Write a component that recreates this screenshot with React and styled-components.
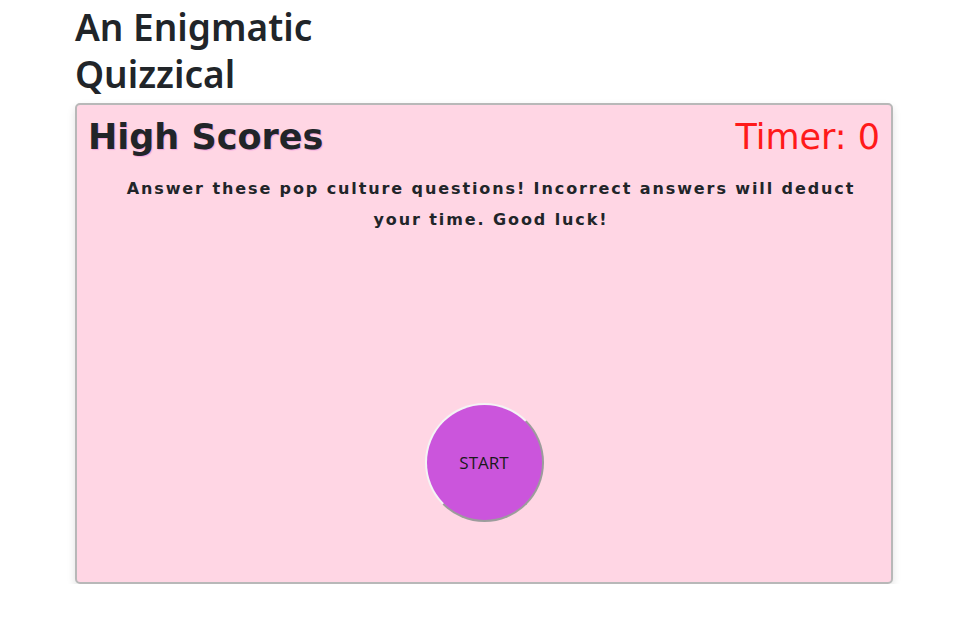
import React from 'react';
import styled, { createGlobalStyle } from 'styled-components';

const Global = createGlobalStyle`
  body {
    margin: 0;
    background: #fff;
    font-family: "Open Sans", "Noto Sans", sans-serif;
    color: #212529;
  }
`;

const Page = styled.div`
  width: 818px;
  margin-left: 75px;
  display: flex;
  flex-direction: column;
`;

const Title = styled.h1`
  margin: 3px 0 6px;
  width: 270px;
  font-family: "Noto Sans", "Open Sans", sans-serif;
  font-size: 37px;
  font-weight: 600;
  line-height: 47px;
  color: #212529;
`;

const Card = styled.div`
  height: 481px;
  box-sizing: border-box;
  background: #ffd6e4;
  border: 2px solid #b8b8b8;
  border-radius: 5px;
  box-shadow: 0 4px 8px rgba(0, 0, 0, 0.12);
  padding: 12px 11px 0;
  display: flex;
  flex-direction: column;
`;

const TopRow = styled.div`
  display: flex;
  justify-content: space-between;
  align-items: baseline;
`;

const Heading = styled.h2`
  margin: 0;
  font-family: "DejaVu Sans", Verdana, sans-serif;
  font-size: 35px;
  font-weight: 700;
  color: #212529;
  text-shadow: 1px 1px 1px #f2a6dc;
`;

const Timer = styled.div`
  font-family: "DejaVu Sans", Verdana, sans-serif;
  font-size: 35px;
  color: #ff1a1a;
`;

const Intro = styled.p`
  margin: 16px 0 0;
  padding-left: 14px;
  text-align: center;
  font-family: "DejaVu Sans", Verdana, sans-serif;
  font-size: 16px;
  font-weight: 700;
  letter-spacing: 1.9px;
  line-height: 31px;
  color: #212529;
`;

const StartButton = styled.button`
  align-self: center;
  margin-top: 168px;
  width: 119px;
  height: 119px;
  border-radius: 50%;
  background: #cb55dc;
  border: 2px solid #f4f4f4;
  border-right-color: #9c9c9c;
  border-bottom-color: #9c9c9c;
  font-family: "Open Sans", "Noto Sans", sans-serif;
  font-size: 17px;
  color: #1a1a1a;
  cursor: pointer;
`;

export default function App() {
  return (
    <>
      <Global />
      <Page>
        <Title>An Enigmatic Quizzical</Title>
        <Card>
          <TopRow>
            <Heading>High Scores</Heading>
            <Timer>Timer: 0</Timer>
          </TopRow>
          <Intro>
            Answer these pop culture questions! Incorrect answers will deduct your time. Good luck!
          </Intro>
          <StartButton>START</StartButton>
        </Card>
      </Page>
    </>
  );
}
